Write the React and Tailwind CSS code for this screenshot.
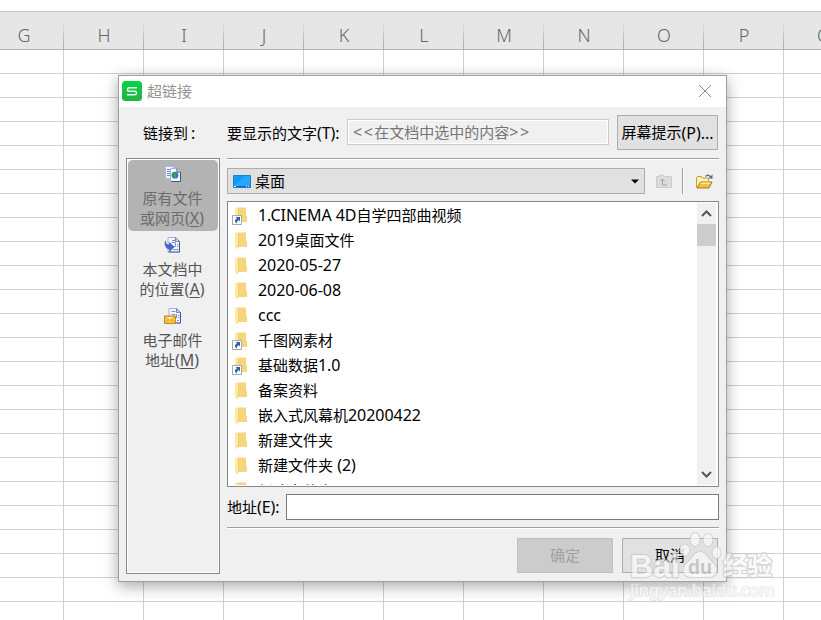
import React from "react";

const CJK = /([\u3000-\u9fff]+)/;

// Latin runs are set one pixel larger than the ideographs around them.
function Mixed({ children }) {
  return children.split(CJK).map((run, i) =>
    run === "" ? null : CJK.test(run) ? (
      <span key={i}>{run}</span>
    ) : (
      <span key={i} className="text-[16px] tracking-[-0.05px]">{run}</span>
    )
  );
}

const columns = ["G", "H", "I", "J", "K", "L", "M", "N", "O", "P", "Q"];

function Sheet() {
  return (
    <div className="-ml-4 w-[880px] pt-[11px]">
      <div className="flex h-[39px] border-y border-t-[#c8c8c8] border-b-[#b4b4b4] bg-[#e6e6e6]">
        {columns.map((c) => (
          <div key={c} className="flex w-20 shrink-0 items-stretch">
            <div className="flex-1 pt-[10px] pl-px text-center text-[18px] leading-[26px] font-light text-[#666666]">{c}</div>
            <div className="mt-3 w-px bg-linear-to-b from-[#dedede] to-[#ababab]" />
          </div>
        ))}
      </div>
      {Array.from({ length: 24 }, (_, r) => (
        <div key={r} className="flex h-6">
          {columns.map((c) => (
            <div key={c} className="w-20 shrink-0 border-r border-b border-[#d0d0d0]" />
          ))}
        </div>
      ))}
    </div>
  );
}

function Sheetlet({ x }) {
  return (
    <g transform={`translate(${x} 0)`}>
      <path d="M.5 .5h7.500l4 4v10.500H.5z" fill="#f3f6fd" stroke="#a3b2d8" />
      <path d="M8 .5v4h4z" fill="#cdd8ef" stroke="#5a6f9c" strokeWidth=".8" />
      <path d="M12 4.500V15H1" fill="none" stroke="#4a5e84" />
    </g>
  );
}

function WebPageIcon() {
  return (
    <svg width="18" height="18" viewBox="0 0 18 18">
      <path d="M1.500.5h8v12h-8z" fill="#f5f8ff" stroke="#a9b9e2" />
      <path d="M3 3.500h4M3 5.500h3M3 7.500h3M3 9.500h3" stroke="#6f86c8" />
      <path d="M6.500 2.500h6.500l3.500 3.500v9.500h-10z" fill="#f7f9fe" stroke="#a3b2d8" />
      <path d="M13 2.500v3.500h3.500v9.500H7" fill="none" stroke="#41577c" />
      <circle cx="11" cy="9.200" r="3.400" fill="#2b78cc" />
      <path d="M8.500 8.500l2.500-2.500 2.500 1-2 2 1 1.500-1.500 2-1.500-1.500z" fill="#3aa540" />
    </svg>
  );
}

function PlaceIcon() {
  return (
    <svg width="18" height="18" viewBox="0 0 18 18">
      <Sheetlet x={3.5} />
      <path d="M8 3.500h3M7.500 5.500h4v4h-4M13 7.500h1.500M13 9.500h1.500M9 12.500h5.500" fill="none" stroke="#8090d2" />
      <path d="M1.500 4C1 6.500 2.500 8 5.500 8V5.500l4.500 4.500-4.500 4.500V12C2 12 .3 8 1.500 4z" fill="#4468cf" stroke="#2f4ba3" strokeWidth=".6" />
    </svg>
  );
}

function MailIcon() {
  return (
    <svg width="18" height="18" viewBox="0 0 18 18">
      <Sheetlet x={4.5} />
      <path d="M7.500 3.500h4M7.500 6.500h4M12.500 6v4M14 7.500h1.500M14 9.500h1.500M13 12.500h2" fill="none" stroke="#8090d2" />
      <path d="M.5 8h11v7.500H.5z" fill="#f9c545" stroke="#c48a1c" />
      <path d="M1 8.500h10L6 12.500z" fill="#ffeda0" stroke="#cf9524" strokeWidth=".8" />
      <path d="M1 15l3.500-3.500M11 15l-3.500-3.500" fill="none" stroke="#d99a20" strokeWidth=".8" />
    </svg>
  );
}

const targets = [
  { icon: WebPageIcon, a: "原有文件", b: "或网页", key: "X", active: true },
  { icon: PlaceIcon, a: "本文档中", b: "的位置", key: "A" },
  { icon: MailIcon, a: "电子邮件", b: "地址", key: "M" },
];

function Targets() {
  return (
    <div className="h-[416px] w-[94px] shrink-0 border border-[#828790]">
      <div className="h-full border border-white">
        {targets.map(({ icon: Icon, a, b, key, active }) => (
          <div
            key={key}
            className={
              active
                ? "flex h-[71px] flex-col items-center rounded-[5px] bg-[#b3b3b3] pt-[6px] text-[#6b6b6b]"
                : "flex h-[71px] flex-col items-center pt-[6px] text-[#555555]"
            }
          >
            <Icon />
            <div className="mt-1 h-5 pr-px leading-5">{a}</div>
            <div className="h-5 pr-[2px] leading-5 whitespace-nowrap">
              {b}<span className="text-[16px]">(<span className="underline decoration-1 underline-offset-2">{key}</span>)</span>
            </div>
          </div>
        ))}
      </div>
    </div>
  );
}

function Folder({ shortcut }) {
  return (
    <svg width="18" height="20" viewBox="0 0 18 20" className="shrink-0">
      <path d="M5 1.500h9v8.500h1v6H5z" fill="#f6d67c" />
      <path d="M3 1.500l3 1V15l-1.500 3L3 16z" fill="#fee9a8" />
      <path d="M6.500 3v12l-1.500 2.500" stroke="#f2cc6c" strokeWidth=".8" fill="none" />
      {shortcut && (
        <g>
          <path d="M.5 9.500h9v9h-9z" fill="#fff" stroke="#a8a8a8" />
          <path d="M3.500 11h4.500v4.500L6.500 14Q4.800 15 4.500 17.500 1 14.500 5 12.500z" fill="#2d62a8" />
        </g>
      )}
    </svg>
  );
}

const files = [
  ["1.CINEMA 4D自学四部曲视频", true],
  ["2019桌面文件"],
  ["2020-05-27"],
  ["2020-06-08"],
  ["ccc"],
  ["千图网素材", true],
  ["基础数据1.0", true],
  ["备案资料"],
  ["嵌入式风幕机20200422"],
  ["新建文件夹"],
  ["新建文件夹 (2)"],
];

function FileList() {
  return (
    <div className="mt-[7px] flex h-[286px] border border-[#828790] bg-white py-px pr-[2px] pl-1">
      <div className="flex-1 overflow-hidden">
        {files.map(([name, shortcut]) => (
          <div key={name} className="flex h-[25px] items-center">
            <Folder shortcut={shortcut} />
            <div className="ml-2 leading-[25px] whitespace-nowrap"><Mixed>{name}</Mixed></div>
          </div>
        ))}
        <div className="flex h-[25px] items-center">
          <Folder />
          <div className="mt-[2px] ml-2 leading-[25px] whitespace-nowrap">新建文件夹</div>
        </div>
      </div>
      <div className="flex w-[19px] flex-col items-center bg-[#f0f0f0]">
        <div className="flex h-[21px] items-center">
          <svg width="11" height="8" viewBox="0 0 11 8"><path d="M1 6l4.500-4.500 4.500 4.500" fill="none" stroke="#555" strokeWidth="2" /></svg>
        </div>
        <div className="h-[22px] w-full bg-[#cdcdcd]" />
        <div className="flex-1" />
        <div className="flex h-[21px] items-center">
          <svg width="11" height="8" viewBox="0 0 11 8"><path d="M1 1l4.500 4.500 4.500-4.500" fill="none" stroke="#555" strokeWidth="2" /></svg>
        </div>
      </div>
    </div>
  );
}

function LookIn() {
  return (
    <div className="mt-2 flex h-[26px] items-center">
      <div className="flex h-[26px] w-[418px] items-center border border-[#adadad] bg-[#e1e1e1] pr-[5px] pl-[5px]">
        <svg width="18" height="13" viewBox="0 0 18 13">
          <path d="M.5 .5h17v12H.5z" fill="#119bf8" stroke="#1b7fca" />
          <path d="M1 11L12 1h5v10z" fill="#35b0ff" opacity=".6" />
          <path d="M1 11.500h16" stroke="#0d66b0" />
          <path d="M1 11.500h2M13 11.500h1M15 11.500h1" stroke="#d5f0ff" />
        </svg>
        <div className="ml-1 flex-1">桌面</div>
        <svg width="8" height="5" viewBox="0 0 8 5"><path d="M0 .5h8L4 4.500z" fill="#000" /></svg>
      </div>
      <svg className="ml-[11px]" width="16" height="15" viewBox="0 0 16 15">
        <path d="M.5 2.500h2l1-1.500h4l1 1.500h7v11H.5z" fill="#dcdcdc" stroke="#cccccc" />
        <path d="M6.500 5v6H11M4.500 7l2-2 2 2" fill="none" stroke="#a6a6a6" />
      </svg>
      <div className="ml-[10px] h-[26px] w-[2px] border-l border-[#a0a0a0] bg-white" />
      <svg className="ml-3" width="17" height="15" viewBox="0 0 17 15">
        <path d="M.5 13.500v-10l1-1h4l1 1.500h6v3" fill="#fff0ad" stroke="#c09a4c" />
        <path d="M1 14l3.500-6h11.500L13 14z" fill="#f5bf45" stroke="#a87518" />
        <path d="M5 8.500h9.500L14 10H4z" fill="#ffe9a0" />
        <path d="M9.500 2.500Q12 -.5 14.500 3" fill="none" stroke="#4c6794" strokeWidth="1.200" />
        <path d="M16.500 .5v4h-4z" fill="#4c6794" />
      </svg>
    </div>
  );
}

function Rule({ className }) {
  return <div className={`h-[2px] border-t border-[#a0a0a0] bg-white ${className ?? ""}`} />;
}

function Dialog() {
  return (
    <div className="absolute top-[75px] left-[118px] h-[507px] w-[609px] border border-[#a0a0a0] bg-[#f0f0f0] text-[15px] text-black shadow-[0_4px_14px_rgba(0,0,0,0.35)]">
      <div className="flex h-[31px] items-center bg-white pr-[14px] pb-px pl-[3px]">
        <svg width="20" height="20" viewBox="0 0 20 20">
          <defs>
            <linearGradient id="brand" x1="0" y1="0" x2="0" y2="1">
              <stop offset="0" stopColor="#06d243" />
              <stop offset="1" stopColor="#27b148" />
            </linearGradient>
          </defs>
          <rect width="20" height="20" rx="3.500" fill="url(#brand)" />
          <path d="M15 6.700H7.200Q5.500 6.700 5.500 8.500T7.200 10.300H12.800Q14.500 10.300 14.500 12T12.800 13.700H5" fill="none" stroke="#e9ffef" strokeWidth="1.500" />
        </svg>
        <div className="ml-[5px] flex-1 pt-px text-[#949494]">超链接</div>
        <svg width="14" height="14" viewBox="0 0 14 14"><path d="M1 1l12 12M13 1L1 13" stroke="#858585" strokeWidth="1" /></svg>
      </div>
      <div className="flex h-[51px] items-start pt-2">
        <div className="w-[84px] pt-[6px] pl-6 whitespace-nowrap">链接到<span className="pl-[3px] text-[16px]">:</span></div>
        <div className="ml-6 w-[120px] pt-[6px] whitespace-nowrap"><Mixed>要显示的文字(T):</Mixed></div>
        <div className="mt-1 h-[26px] w-[262px] border border-[#cccccc]">
          <div className="flex h-full items-center border border-white pl-1 whitespace-nowrap text-[#757575]">
            <span className="text-[16px] tracking-[1.500px]">&lt;&lt;</span>在文档中选中的内容<span className="text-[16px] tracking-[1.500px]">&gt;&gt;</span>
          </div>
        </div>
        <div className="ml-2 flex h-[35px] w-[101px] items-center justify-center border border-[#adadad] bg-[#e1e1e1] whitespace-nowrap">
          <Mixed>屏幕提示(P)...</Mixed>
        </div>
      </div>
      <div className="flex pl-[7px]">
        <Targets />
        <div className="ml-[7px] w-[492px]">
          <Rule />
          <LookIn />
          <FileList />
          <div className="mt-[7px] flex h-[26px] items-center">
            <div className="w-[59px] whitespace-nowrap"><Mixed>地址(E):</Mixed></div>
            <div className="h-[26px] flex-1 border border-[#7a7a7a] bg-white" />
          </div>
          <Rule className="mt-[7px]" />
          <div className="mt-[9px] flex justify-end gap-[9px] pr-px">
            <div className="flex h-[35px] w-24 items-center justify-center border border-[#bfbfbf] bg-[#cccccc] text-[#a0a0a0]">确定</div>
            <div className="flex h-[35px] w-24 items-center justify-center border border-[#adadad] bg-[#e1e1e1]">取消</div>
          </div>
        </div>
      </div>
    </div>
  );
}

function Watermark() {
  return (
    <svg className="absolute top-[525px] left-[622px]" width="160" height="80" viewBox="0 0 160 80">
      <g fill="#fafafa" stroke="#c9c9c9" strokeLinejoin="round" opacity=".72" style={{ paintOrder: "stroke" }}>
        <g strokeWidth="2">
          <ellipse cx="73" cy="14.500" rx="4.500" ry="6.500" />
          <ellipse cx="86" cy="15" rx="4.500" ry="6" />
          <ellipse cx="63" cy="25" rx="4.500" ry="5.500" />
          <ellipse cx="94.500" cy="27.500" rx="4" ry="5.500" />
          <path d="M78 27c6 0 8 7 13 11 6 5 4 14-4 14H69c-8 0-10-9-4-14 5-4 7-11 13-11z" />
        </g>
        <g strokeWidth="2.500" fontFamily="'Liberation Sans', sans-serif" fontWeight="700">
          <text x="8" y="51.500" fontSize="32" textLength="50" lengthAdjust="spacingAndGlyphs">Bai</text>
          <text x="66" y="49" fontSize="21" textLength="24" lengthAdjust="spacingAndGlyphs" fill="#bcbcbc" stroke="none">du</text>
          <text x="101" y="50" fontSize="25" textLength="49" fontFamily="'Noto Sans CJK SC', sans-serif">经验</text>
        </g>
        <text x="8" y="71" fontSize="17" textLength="145" strokeWidth="1.500" stroke="#dadada" fontFamily="'Noto Sans', sans-serif">jingyan.baidu.com</text>
      </g>
    </svg>
  );
}

export default function App() {
  return (
    <div className="relative h-[620px] w-[821px] overflow-hidden bg-white font-['Noto_Sans','Noto_Sans_CJK_SC',sans-serif]">
      <Sheet />
      <Dialog />
      <Watermark />
    </div>
  );
}
